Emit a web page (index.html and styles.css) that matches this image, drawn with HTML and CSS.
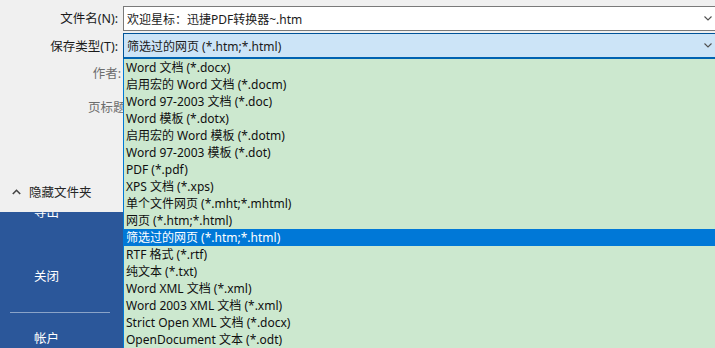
FILE: index.html
```html
<!DOCTYPE html>
<html lang="zh">
<head>
<meta charset="utf-8">
<link rel="stylesheet" href="styles.css">
</head>
<body>
<div class="page">
  <div class="dialog">
    <div class="row row-name">
      <div class="label">文件名(N):</div>
      <div class="field">
        <span class="value">欢迎星标：迅捷PDF转换器~.htm</span>
        <svg class="chev" width="8" height="5" viewBox="0 0 8 5"><path d="M0.5 0.5 L4 4 L7.5 0.5" fill="none" stroke="#505050" stroke-width="1.1"/></svg>
      </div>
    </div>
    <div class="row row-type">
      <div class="label">保存类型(T):</div>
      <div class="field select">
        <span class="value">筛选过的网页 (*.htm;*.html)</span>
        <svg class="chev" width="8" height="5" viewBox="0 0 8 5"><path d="M0.5 0.5 L4 4 L7.5 0.5" fill="none" stroke="#505050" stroke-width="1.1"/></svg>
      </div>
    </div>
    <div class="row row-author">
      <div class="label dim">作者:</div>
    </div>
    <div class="row row-title">
      <div class="label dim">页标题</div>
    </div>
    <div class="hide-folders">
      <svg class="up" width="9" height="6" viewBox="0 0 9 6"><path d="M0.8 5 L4.5 1.3 L8.2 5" fill="none" stroke="#444" stroke-width="1.6"/></svg>
      <span>隐藏文件夹</span>
    </div>
  </div>
  <div class="sidebar">
    <div class="nav nav-export">导出</div>
    <div class="nav nav-close">关闭</div>
    <div class="sep"></div>
    <div class="nav nav-account">帐户</div>
  </div>
  <ul class="list">
    <li>Word 文档 (*.docx)</li>
    <li>启用宏的 Word 文档 (*.docm)</li>
    <li>Word 97-2003 文档 (*.doc)</li>
    <li>Word 模板 (*.dotx)</li>
    <li>启用宏的 Word 模板 (*.dotm)</li>
    <li>Word 97-2003 模板 (*.dot)</li>
    <li>PDF (*.pdf)</li>
    <li>XPS 文档 (*.xps)</li>
    <li>单个文件网页 (*.mht;*.mhtml)</li>
    <li>网页 (*.htm;*.html)</li>
    <li class="sel">筛选过的网页 (*.htm;*.html)</li>
    <li>RTF 格式 (*.rtf)</li>
    <li>纯文本 (*.txt)</li>
    <li>Word XML 文档 (*.xml)</li>
    <li>Word 2003 XML 文档 (*.xml)</li>
    <li>Strict Open XML 文档 (*.docx)</li>
    <li>OpenDocument 文本 (*.odt)</li>
  </ul>
</div>
</body>
</html>
```

FILE: styles.css
```css
html, body {
  margin: 0;
  padding: 0;
  background: #f0f0f0;
}
.page {
  position: relative;
  width: 715px;
  height: 348px;
  overflow: hidden;
  font-family: "Noto Sans", "Noto Sans CJK SC", sans-serif;
  font-size: 12px;
  color: #1a1a1a;
  display: flex;
  flex-direction: column;
}
.dialog {
  height: 212px;
  background: #f0f0f0;
  padding-top: 6px;
  box-sizing: border-box;
  display: flex;
  flex-direction: column;
}
.row {
  display: flex;
  align-items: center;
}
.label {
  text-align: right;
  padding-right: 5px;
  box-sizing: border-box;
  width: 123px;
  white-space: nowrap;
  line-height: 17px;
  font-size: 12.5px;
}
.label.dim {
  color: #6d6d6d;
}
.field {
  flex: 1;
  height: 25px;
  box-sizing: border-box;
  background: #ffffff;
  border: 1px solid #7a7a7a;
  border-right: none;
  display: flex;
  align-items: center;
  padding-left: 3px;
}
.field .value {
  flex: 1;
  white-space: nowrap;
}
.chev {
  margin-right: 3px;
}
.row-type {
  margin-top: 2px;
}
.select {
  height: 26px;
  background: #cce4f7;
  border: 1px solid #005499;
  border-bottom: 2px solid #0063b1;
  border-right: none;
}
.row-author {
  margin-top: 6px;
  height: 17px;
}
.row-author .label {
  padding-right: 2px;
}
.row-title {
  margin-top: 17px;
  height: 17px;
}
.row-title .label {
  text-align: left;
  padding-left: 88px;
  padding-right: 0;
  overflow: hidden;
}
.hide-folders {
  margin-top: 67px;
  display: flex;
  align-items: center;
  padding-left: 12px;
  gap: 8px;
  height: 17px;
  color: #262626;
  font-size: 12.5px;
}
.sidebar {
  flex: 1;
  background: #2b579a;
  color: #ffffff;
  overflow: hidden;
  display: flex;
  flex-direction: column;
  font-size: 12.5px;
}
.nav {
  padding-left: 34px;
  height: 17px;
  line-height: 17px;
}
.nav-export {
  margin-top: -8px;
}
.nav-close {
  margin-top: 47px;
}
.sep {
  margin: 27px 0 0 10px;
  width: 100px;
  height: 1px;
  background: #8aa3c8;
}
.nav-account {
  margin-top: 17px;
}
.list {
  position: absolute;
  top: 59px;
  left: 123px;
  right: 0;
  margin: 0;
  padding: 0;
  list-style: none;
  background: #cce8cf;
  border-left: 1px solid #0078d7;
  color: #0f0f0f;
}
.list li {
  height: 17px;
  line-height: 17px;
  padding-left: 2px;
  white-space: nowrap;
}
.list li.sel {
  background: #0078d7;
  color: #ffffff;
}
```
